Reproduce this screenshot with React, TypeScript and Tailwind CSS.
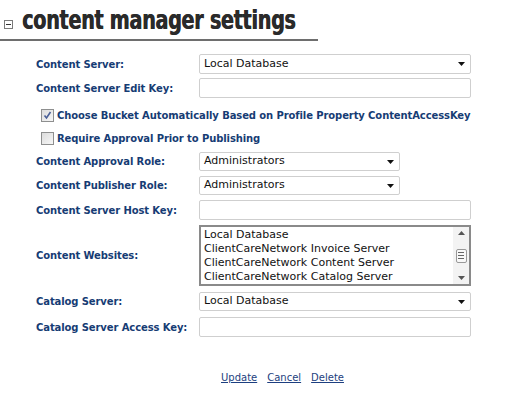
import type { ReactNode } from "react";

const labelFont = "font-['DejaVu_Sans',sans-serif] text-[10px] font-bold text-[#163c74] tracking-[-0.1px]";
const fieldFont = "font-['DejaVu_Sans',sans-serif] text-[11px] text-[#111]";

function Arrow() {
  return (
    <svg width="7" height="4" viewBox="0 0 7 4" className="shrink-0">
      <path d="M0 0h7L3.5 4z" fill="#111" />
    </svg>
  );
}

function Select({ value, width }: { value: string; width: string }) {
  return (
    <div className={`${width} h-full flex items-center justify-between pl-[4px] pr-[5px] border border-[#cfcfcf] rounded-[2px] bg-white ${fieldFont}`}>
      <span>{value}</span>
      <Arrow />
    </div>
  );
}

function TextBox() {
  return <div className="w-[272px] h-full border border-[#cfcfcf] rounded-[2px] bg-white" />;
}

function Row({ label, top, height, children }: { label: string; top: string; height: string; children: ReactNode }) {
  return (
    <div className={`flex items-center ${top} ${height}`}>
      <div className={`w-[163px] ${labelFont}`}>{label}</div>
      {children}
    </div>
  );
}

function CheckBox({ checked }: { checked?: boolean }) {
  return (
    <div className="w-[13px] h-[13px] border border-[#8e8f8f] bg-gradient-to-br from-[#dcdcdc] to-[#f7f7f7] flex items-center justify-center">
      {checked && (
        <svg width="9" height="9" viewBox="0 0 9 9">
          <path d="M1.5 4.5l2 2.5L7.5 1" fill="none" stroke="#4a5f97" strokeWidth="1.6" />
        </svg>
      )}
    </div>
  );
}

const websites = [
  "Local Database",
  "ClientCareNetwork Invoice Server",
  "ClientCareNetwork Content Server",
  "ClientCareNetwork Catalog Server",
];

export default function App() {
  return (
    <div className="w-[507px] h-[398px] bg-white overflow-hidden">
      {/* header */}
      <div className="flex items-end h-[39px] pl-[4px]">
        <div className="w-[9px] h-[9px] border border-[#7a7a7a] flex items-center justify-center mb-[10px]">
          <div className="w-[5px] h-px bg-[#333]" />
        </div>
        <h1 className="ml-[9px] mb-[6px] origin-left scale-x-[0.71] whitespace-nowrap font-['DejaVu_Sans',sans-serif] font-bold text-[27px] leading-none tracking-[-0.4px] text-[#2a2a2a] [text-shadow:0.7px_0_0_#2a2a2a]">
          content manager settings
        </h1>
      </div>
      <div className="h-[2px] bg-[#6e6e6e] w-[318px]" />

      {/* form */}
      <div className="pl-[36px]">
        <Row label="Content Server:" top="mt-[13px]" height="h-[20px]">
          <Select value="Local Database" width="w-[272px]" />
        </Row>
        <Row label="Content Server Edit Key:" top="mt-[4px]" height="h-[20px]">
          <TextBox />
        </Row>

        <div className={`flex items-center gap-[3px] pl-[5px] mt-[7px] h-[20px] ${labelFont}`}>
          <CheckBox checked />
          <span>Choose Bucket Automatically Based on Profile Property ContentAccessKey</span>
        </div>
        <div className={`flex items-center gap-[3px] pl-[5px] mt-[3px] h-[20px] ${labelFont}`}>
          <CheckBox />
          <span>Require Approval Prior to Publishing</span>
        </div>

        <Row label="Content Approval Role:" top="mt-[4px]" height="h-[19px]">
          <Select value="Administrators" width="w-[201px]" />
        </Row>
        <Row label="Content Publisher Role:" top="mt-[5px]" height="h-[19px]">
          <Select value="Administrators" width="w-[201px]" />
        </Row>
        <Row label="Content Server Host Key:" top="mt-[5px]" height="h-[20px]">
          <TextBox />
        </Row>
        <Row label="Content Websites:" top="mt-[5px]" height="h-[61px]">
          <div className="w-[272px] h-full border-2 border-[#8a8a8a] flex bg-white">
            <div className={`flex-1 pl-[3px] pt-[1px] leading-[14px] ${fieldFont}`}>
              {websites.map((w) => (
                <div key={w}>{w}</div>
              ))}
            </div>
            <div className="w-[16px] h-full bg-[#f3f3f3] flex flex-col items-center justify-between py-[4px]">
              <svg width="7" height="4" viewBox="0 0 7 4">
                <path d="M0 4h7L3.5 0z" fill="#555" />
              </svg>
              <div className="w-[11px] h-[14px] border border-[#999] rounded-[2px] bg-[#f8f8f8] flex flex-col items-center justify-center gap-[2px]">
                <div className="w-[6px] h-px bg-[#666]" />
                <div className="w-[6px] h-px bg-[#666]" />
                <div className="w-[6px] h-px bg-[#666]" />
              </div>
              <svg width="7" height="4" viewBox="0 0 7 4">
                <path d="M0 0h7L3.5 4z" fill="#555" />
              </svg>
            </div>
          </div>
        </Row>
        <Row label="Catalog Server:" top="mt-[6px]" height="h-[19px]">
          <Select value="Local Database" width="w-[272px]" />
        </Row>
        <Row label="Catalog Server Access Key:" top="mt-[6px]" height="h-[20px]">
          <TextBox />
        </Row>
      </div>

      {/* actions */}
      <div className="flex gap-[10px] mt-[33px] pl-[221px] font-['DejaVu_Sans',sans-serif] text-[10px] text-[#1d3f80]">
        <a href="#" className="underline">Update</a>
        <a href="#" className="underline">Cancel</a>
        <a href="#" className="underline">Delete</a>
      </div>
    </div>
  );
}
